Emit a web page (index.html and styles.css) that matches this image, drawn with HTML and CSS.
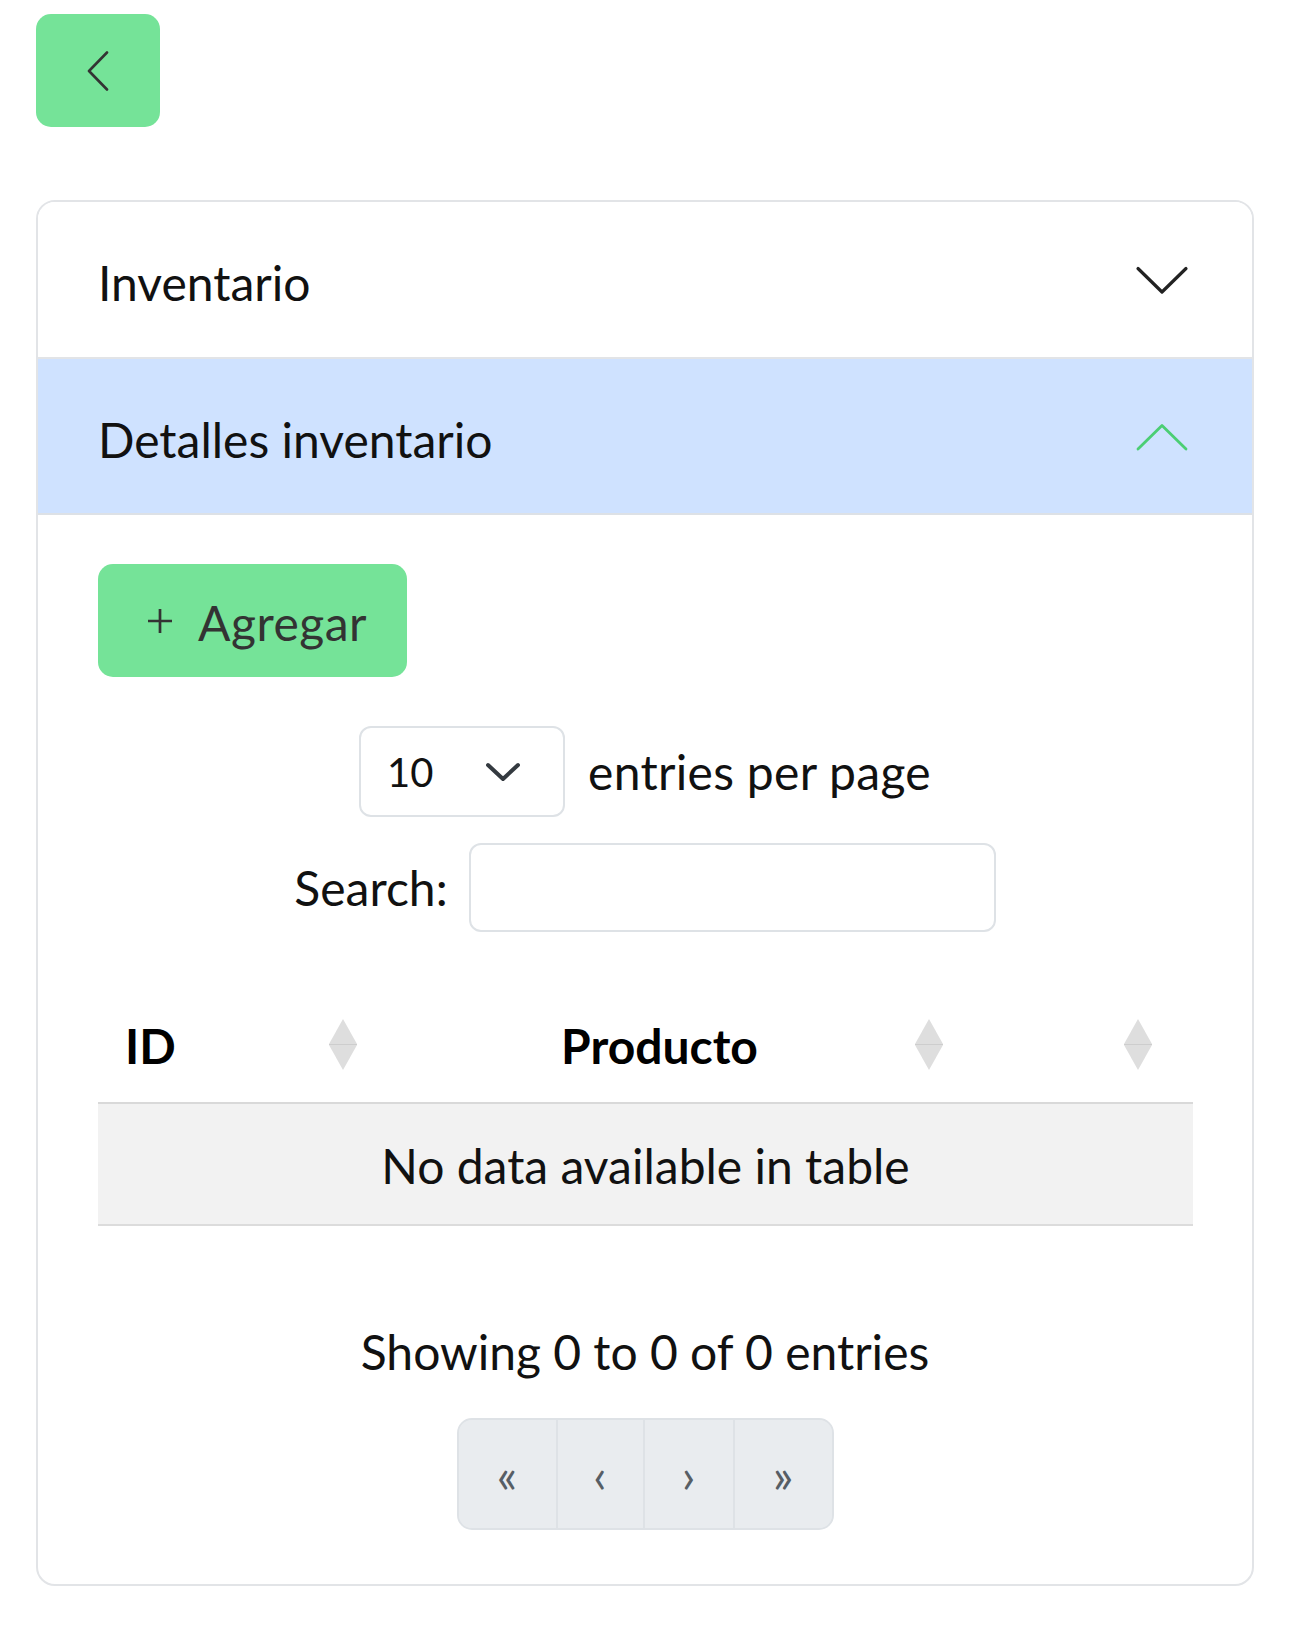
FILE: index.html
```html
<!DOCTYPE html>
<html lang="es">
<head>
<meta charset="utf-8">
<title>Inventario</title>
<link rel="stylesheet" href="styles.css">
</head>
<body>
<div class="page">
  <button class="back-btn" aria-label="Volver">
    <svg width="22" height="40" viewBox="0 0 22 40"><polyline points="20,1.5 2,20 20,38.5" fill="none" stroke="#333" stroke-width="2.6" stroke-linecap="round" stroke-linejoin="round"/></svg>
  </button>

  <div class="accordion">
    <div class="acc-item">
      <button class="acc-header">
        <span>Inventario</span>
        <svg class="acc-icon" width="60" height="60" viewBox="0 0 60 60"><polyline points="6,18.5 30,42 54,18.5" fill="none" stroke="#222" stroke-width="3.2" stroke-linecap="round" stroke-linejoin="round"/></svg>
      </button>
    </div>
    <div class="acc-item">
      <button class="acc-header active">
        <span>Detalles inventario</span>
        <svg class="acc-icon" width="60" height="60" viewBox="0 0 60 60"><polyline points="6,42 30,18.5 54,42" fill="none" stroke="#4bce74" stroke-width="2.8" stroke-linecap="round" stroke-linejoin="round"/></svg>
      </button>
      <div class="acc-body">
        <button class="btn-add">
          <svg width="26" height="26" viewBox="0 0 26 26"><path d="M13 1v24M1 13h24" stroke="#333" stroke-width="2.7"/></svg>
          <span>Agregar</span>
        </button>

        <div class="dt-length">
          <div class="select">
            <span>10</span>
            <svg width="36" height="20" viewBox="0 0 36 20"><polyline points="3,3 18,17 33,3" fill="none" stroke="#343a40" stroke-width="4" stroke-linecap="round" stroke-linejoin="round"/></svg>
          </div>
          <span class="label label-wide">entries per page</span>
        </div>

        <div class="dt-search">
          <label class="label" for="q">Search:</label>
          <input id="q" class="search-input" type="search">
        </div>

        <table class="dt-table">
          <colgroup>
            <col class="c-id">
            <col class="c-prod">
            <col class="c-act">
          </colgroup>
          <thead>
            <tr>
              <th class="th-left">ID<svg class="sort" width="28" height="51" viewBox="0 0 28 51"><polygon points="14,0 28,25 0,25" fill="#dedede"/><polygon points="0,26 28,26 14,51" fill="#dedede"/><line x1="0" y1="25.5" x2="28" y2="25.5" stroke="#cdcdcd" stroke-width="1"/></svg></th>
              <th class="th-center">Producto<svg class="sort" width="28" height="51" viewBox="0 0 28 51"><polygon points="14,0 28,25 0,25" fill="#dedede"/><polygon points="0,26 28,26 14,51" fill="#dedede"/><line x1="0" y1="25.5" x2="28" y2="25.5" stroke="#cdcdcd" stroke-width="1"/></svg></th>
              <th class="th-left"><svg class="sort" width="28" height="51" viewBox="0 0 28 51"><polygon points="14,0 28,25 0,25" fill="#dedede"/><polygon points="0,26 28,26 14,51" fill="#dedede"/><line x1="0" y1="25.5" x2="28" y2="25.5" stroke="#cdcdcd" stroke-width="1"/></svg></th>
            </tr>
          </thead>
          <tbody>
            <tr><td colspan="3">No data available in table</td></tr>
          </tbody>
        </table>

        <div class="dt-info">Showing 0 to 0 of 0 entries</div>

        <nav class="pagination">
          <button class="pg pg-first">«</button>
          <button class="pg pg-prev">‹</button>
          <button class="pg pg-next">›</button>
          <button class="pg pg-last">»</button>
        </nav>
      </div>
    </div>
  </div>
</div>
</body>
</html>
```

FILE: styles.css
```css
* { box-sizing: border-box; }
html, body { margin: 0; background: #fff; }
body {
  font-family: Lato, "Noto Sans", sans-serif;
  color: #111;
}
button { font-family: inherit; cursor: pointer; }

.page { padding: 14px 36px 0; }

.back-btn {
  display: flex;
  align-items: center;
  justify-content: center;
  width: 124px;
  height: 113px;
  padding: 0;
  border: none;
  border-radius: 15px;
  background: #75e398;
}

.accordion {
  margin-top: 73px;
  border: 2px solid #e2e4e7;
  border-radius: 19px;
  overflow: hidden;
}

.acc-header {
  display: flex;
  align-items: center;
  justify-content: space-between;
  width: 100%;
  height: 157px;
  padding: 0 60px;
  border: none;
  border-bottom: 2px solid #e2e4e7;
  background: #fff;
  font-size: 48px;
  color: #111;
  text-align: left;
}
.acc-header span { padding-top: 5px; }
.acc-header.active {
  height: 156px;
  border-bottom: none;
  background: #cfe2ff;
  box-shadow: inset 0 -2px 0 #dde1e6;
}
.acc-icon { flex: none; }

.acc-body { padding: 49px 60px 54px; }

.btn-add {
  display: inline-flex;
  align-items: center;
  gap: 25px;
  height: 113px;
  padding: 0 40px 0 49px;
  border: none;
  border-radius: 15px;
  background: #75e398;
  color: #333;
  font-size: 48px;
}
.btn-add span { padding-top: 4px; letter-spacing: 0.5px; }

.label { font-size: 48px; color: #111; }
.label-wide { letter-spacing: 0.3px; }

.dt-length {
  display: flex;
  align-items: center;
  justify-content: center;
  gap: 23px;
  margin-top: 49px;
}
.select {
  display: flex;
  align-items: center;
  justify-content: space-between;
  width: 206px;
  height: 91px;
  padding: 0 42px 0 26px;
  border: 2px solid #dee2e6;
  border-radius: 12px;
  font-size: 40px;
  color: #111;
}

.dt-search {
  display: flex;
  align-items: center;
  justify-content: center;
  gap: 21px;
  margin-top: 26px;
}
.search-input {
  width: 527px;
  height: 89px;
  border: 2px solid #dee2e6;
  border-radius: 12px;
  background: #fff;
  font-size: 42px;
}

.dt-table {
  width: 100%;
  margin-top: 56px;
  border-collapse: collapse;
  table-layout: fixed;
}
.c-id { width: 300px; }
.c-prod { width: 586px; }
.c-act { width: 209px; }

.dt-table th {
  position: relative;
  height: 115px;
  padding: 0 90px 0 27px;
  border-bottom: 2px solid #d9d9d9;
  font-size: 48px;
  font-weight: 700;
  color: #000;
}
.th-left { text-align: left; }
.th-center { text-align: center; }
.sort {
  position: absolute;
  right: 41px;
  top: 50%;
  margin-top: -26px;
}
.dt-table td {
  height: 122px;
  padding-top: 4px;
  background: #f2f2f2;
  border-bottom: 2px solid #dcdcdc;
  text-align: center;
  font-size: 48px;
  color: #111;
}

.dt-info {
  margin-top: 90px;
  text-align: center;
  font-size: 48px;
  line-height: 72px;
  color: #111;
}

.pagination {
  display: flex;
  width: fit-content;
  margin: 30px auto 0;
  border: 2px solid #dee2e6;
  border-radius: 15px;
  overflow: hidden;
  background: #e9ecef;
}
.pg {
  display: flex;
  align-items: center;
  justify-content: center;
  height: 108px;
  padding: 0;
  border: none;
  border-left: 2px solid #dee2e6;
  background: #e9ecef;
  color: #575e65;
  font-size: 48px;
}
.pg-first { width: 97px; border-left: none; }
.pg-prev { width: 87px; }
.pg-next { width: 90px; }
.pg-last { width: 99px; }
```
